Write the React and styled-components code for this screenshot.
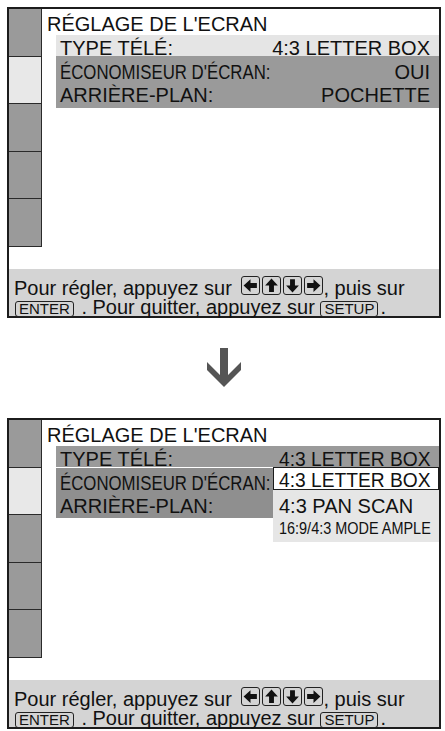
import React from 'react'
import styled, { createGlobalStyle } from 'styled-components'

const GlobalStyle = createGlobalStyle`
  body {
    margin: 0;
    background: #fff;
    font-family: "Liberation Sans", Arial, Helvetica, sans-serif;
    color: #111;
  }
`

const Page = styled.div`
  width: 445px;
  padding: 7px 0 0 7px;
  box-sizing: border-box;
`

const Screen = styled.div`
  width: 434px;
  height: 311px;
  box-sizing: border-box;
  border: 2px solid #1c1c1c;
  display: flex;
  flex-direction: column;
  background: #fff;
`

const Body = styled.div`
  flex: 1;
  display: flex;
  min-height: 0;
`

const Sidebar = styled.div`
  width: 33px;
  flex: none;
  display: flex;
  flex-direction: column;
`

const Tab = styled.div`
  height: 46.5px;
  flex: none;
  background: ${p => (p.$active ? '#e8e8e8' : '#9a9a9a')};
  border-right: 1px solid #2a2a2a;
  border-bottom: 1px solid #2a2a2a;
`

const Content = styled.div`
  flex: 1;
  min-width: 0;
  font-size: 20px;
  line-height: 23px;
  white-space: nowrap;
`

const Title = styled.div`
  height: 26px;
  box-sizing: border-box;
  padding: 4px 0 0 5px;
`

const Row = styled.div`
  height: 21px;
  box-sizing: border-box;
  margin-left: 14px;
  padding: 1.5px ${p => (p.$spread ? 9 : 0)}px 0 4px;
  background: ${p => p.$bg};
  display: flex;
  justify-content: ${p => (p.$spread ? 'space-between' : 'flex-start')};
`

const Group = styled.div`
  margin-left: 14px;
  padding: 5px 9px 0 4px;
  height: 52px;
  box-sizing: border-box;
  background: #9a9a9a;
`

const Line = styled.div`
  display: flex;
  justify-content: space-between;
`

const Cell = styled.span`
  display: inline-block;
  flex: none;
  width: ${p => p.$w || 'auto'};
  padding-left: ${p => p.$pl || 0}px;
`

const Squeezed = styled.span`
  display: inline-block;
  transform: scaleX(${p => p.$x});
  transform-origin: left center;
`

const Split = styled.div`
  display: flex;
  align-items: flex-start;
  margin-left: 14px;
`

const LabelBlock = styled.div`
  width: 217px;
  flex: none;
  height: 51px;
  box-sizing: border-box;
  border-top: 1px solid #fff;
  padding: 4px 0 0 4px;
  background: #8f8f8f;
`

const Dropdown = styled.div`
  flex: 1;
  min-width: 0;
  display: flex;
  flex-direction: column;
`

const Selected = styled.div`
  height: 23px;
  box-sizing: border-box;
  border: 1.5px solid #1c1c1c;
  background: #fff;
  padding: 2px 0 0 4.5px;
  line-height: 20px;
`

const Options = styled.div`
  background: #e6e6e6;
  padding: 4.5px 0 2.5px 6px;
`

const Option = styled.div`
  font-size: ${p => p.$size || 20}px;
  line-height: ${p => (p.$size ? 22 : 23)}px;
`

const Footer = styled.div`
  height: 47px;
  flex: none;
  box-sizing: border-box;
  padding: 6.5px 0 0 5px;
  background: #d4d4d4;
  font-size: 20px;
  line-height: 19px;
  white-space: nowrap;
`

const ArrowKey = styled.span`
  display: inline-block;
  width: 19px;
  height: 19px;
  box-sizing: border-box;
  border: 1.5px solid #222;
  border-radius: 3px;
  margin-left: ${p => (p.$first ? 4 : 2)}px;
  vertical-align: baseline;

  svg {
    display: block;
    width: 100%;
    height: 100%;
  }
`

const TextKey = styled.span`
  display: inline-block;
  border: 1.5px solid #222;
  border-radius: 3px;
  font-size: 15px;
  line-height: 14px;
  padding: 0 3px;
  margin: 0 2px 0 ${p => p.$ml || 0}px;
`

const Between = styled.div`
  width: 434px;
  height: 100px;
  display: flex;
  align-items: center;
  justify-content: center;
`

const rotations = { up: 0, right: 90, down: 180, left: 270 }

const Key = ({ dir, first }) => (
  <ArrowKey $first={first}>
    <svg viewBox="0 0 16 16">
      <path
        d="M8 1.5 L14 8 H10.3 V14 H5.7 V8 H2 Z"
        fill="#111"
        transform={`rotate(${rotations[dir]} 8 8)`}
      />
    </svg>
  </ArrowKey>
)

const Sidebar5 = ({ active = 1 }) => (
  <Sidebar>
    {[0, 1, 2, 3, 4].map(i => (
      <Tab key={i} $active={i === active} />
    ))}
  </Sidebar>
)

const Help = () => (
  <Footer>
    <div>
      Pour régler, appuyez sur
      {' '}
      <Key dir="left" first />
      <Key dir="up" />
      <Key dir="down" />
      <Key dir="right" />, puis sur
    </div>
    <div>
      <TextKey $ml={1}>ENTER</TextKey> . Pour quitter, appuyez sur <TextKey>SETUP</TextKey>.
    </div>
  </Footer>
)

const DownArrow = () => (
  <svg width="34" height="40" viewBox="0 0 34 40">
    <path d="M13 0 H21 V27 L34 14 V22 L17 39 L0 22 V14 L13 27 Z" fill="#555" />
  </svg>
)

export default function App() {
  return (
    <Page>
      <GlobalStyle />

      <Screen>
        <Body>
          <Sidebar5 />
          <Content>
            <Title>RÉGLAGE DE L'ECRAN</Title>
            <Row $bg="#e5e5e5" $spread>
              <span>TYPE TÉLÉ:</span>
              <span>4:3 LETTER BOX</span>
            </Row>
            <Group>
              <Line>
                <Squeezed $x={0.84}>ÉCONOMISEUR D'ÉCRAN:</Squeezed>
                <span>OUI</span>
              </Line>
              <Line>
                <span>ARRIÈRE-PLAN:</span>
                <span>POCHETTE</span>
              </Line>
            </Group>
          </Content>
        </Body>
        <Help />
      </Screen>

      <Between>
        <DownArrow />
      </Between>

      <Screen>
        <Body>
          <Sidebar5 />
          <Content>
            <Title>RÉGLAGE DE L'ECRAN</Title>
            <Row $bg="#9a9a9a">
              <Cell $w="213px">TYPE TÉLÉ:</Cell>
              <Cell $pl={6}>
                <Squeezed $x={0.96}>4:3 LETTER BOX</Squeezed>
              </Cell>
            </Row>
            <Split>
              <LabelBlock>
                <div>
                  <Squeezed $x={0.84}>ÉCONOMISEUR D'ÉCRAN:</Squeezed>
                </div>
                <div>ARRIÈRE-PLAN:</div>
              </LabelBlock>
              <Dropdown>
                <Selected>
                  <Squeezed $x={0.96}>4:3 LETTER BOX</Squeezed>
                </Selected>
                <Options>
                  <Option>4:3 PAN SCAN</Option>
                  <Option $size={17}>
                    <Squeezed $x={0.85}>16:9/4:3 MODE AMPLE</Squeezed>
                  </Option>
                </Options>
              </Dropdown>
            </Split>
          </Content>
        </Body>
        <Help />
      </Screen>
    </Page>
  )
}
